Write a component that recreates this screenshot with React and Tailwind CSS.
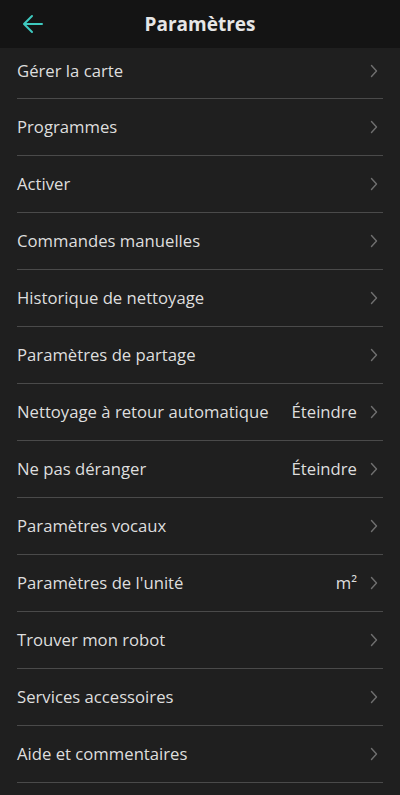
import React from "react";

const rows = [
  ["Gérer la carte"],
  ["Programmes"],
  ["Activer"],
  ["Commandes manuelles"],
  ["Historique de nettoyage"],
  ["Paramètres de partage"],
  ["Nettoyage à retour automatique", "Éteindre"],
  ["Ne pas déranger", "Éteindre"],
  ["Paramètres vocaux"],
  ["Paramètres de l'unité", "m²"],
  ["Trouver mon robot"],
  ["Services accessoires"],
  ["Aide et commentaires"],
];

function Chevron() {
  return (
    <svg width="8" height="14" viewBox="0 0 8 14" fill="none" className="shrink-0">
      <path d="M1.5 1.5 L6.5 7 L1.5 12.5" stroke="#6f6f6f" strokeWidth="1.4" strokeLinecap="round" strokeLinejoin="round" />
    </svg>
  );
}

export default function App() {
  return (
    <div className="w-[400px] h-[795px] overflow-hidden bg-[#1f1f1f] text-[#dedede]" style={{ fontFamily: '"Open Sans", "Noto Sans", sans-serif' }}>
      <div className="h-12 bg-[#141414] flex items-center relative">
        <svg className="absolute left-[22px] top-[14px]" width="22" height="20" viewBox="0 0 22 20" fill="none">
          <path d="M20 10 H2.5 M10 2 L2 10 L10 18" stroke="#3ec9bf" strokeWidth="2" strokeLinecap="round" strokeLinejoin="round" />
        </svg>
        <div className="flex-1 text-center text-[19px] font-bold text-[#e6e6e6] pt-[1px]">Paramètres</div>
      </div>
      <div className="px-[17px]">
        {rows.map(([label, value], i) => (
          <div
            key={i}
            className={`flex items-center border-b border-[#4a4a4a] ${i === 0 ? "h-[51px] pb-[5px]" : "h-[57px]"}`}
          >
            <div className="flex-1 text-[16.7px]">{label}</div>
            {value ? (
              <div className="text-[16.7px] mr-[13px]">{value}</div>
            ) : null}
            <div className="mr-[5px]"><Chevron /></div>
          </div>
        ))}
      </div>
    </div>
  );
}
